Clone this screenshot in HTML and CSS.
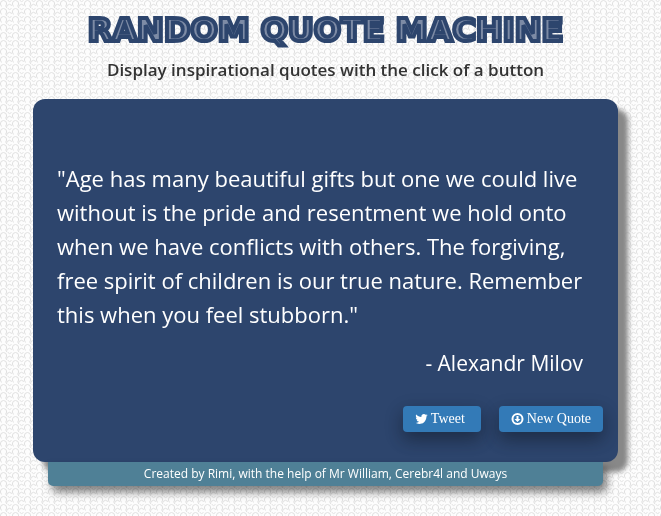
FILE: index.html
```html
<!DOCTYPE html>
<html lang="en">
<head>
<meta charset="utf-8">
<meta name="viewport" content="width=device-width, initial-scale=1">
<title>Random Quote Machine</title>
<link rel="stylesheet" href="styles.css">
</head>
<body>
<svg class="backdrop" aria-hidden="true">
  <defs>
    <pattern id="weave" width="12" height="8" patternUnits="userSpaceOnUse">
      <g fill="none" stroke="#e0e0e0" stroke-width="1">
        <path d="M1 1.500Q3.500-.5 6 1.500M1 1.500Q-.5 4 1.500 6.500M6 1.500Q7.500 4 5.500 6.500"/>
        <path d="M7 5.500Q9.500 3 12 5.500M7 5.500L6.500 8M7.500 0Q9.500 3 11.500 .5"/>
      </g>
    </pattern>
  </defs>
  <rect width="100%" height="100%" fill="url(#weave)"/>
</svg>
<div class="page">
  <header class="header">
    <h1 class="title">RANDOM QUOTE MACHINE</h1>
    <p class="subtitle">Display inspirational quotes with the click of a button</p>
  </header>
  <main class="card">
    <blockquote class="quote">"Age has many beautiful gifts but one we could live without is the pride and resentment we hold onto when we have conflicts with others. The forgiving, free spirit of children is our true nature. Remember this when you feel stubborn."</blockquote>
    <p class="author">- Alexandr Milov</p>
    <div class="actions">
      <button class="btn btn-tweet" type="button">
        <svg class="icon" viewBox="0 0 1664 1792" aria-hidden="true"><path fill="currentColor" d="M1620 408q-67 98-162 167 1 14 1 42 0 130-38 259.500t-115.500 248.500-184.500 210.500-258 146-323 54.500q-271 0-496-145 35 4 78 4 225 0 401-138-105-2-188-64.500t-114-159.500q33 5 61 5 43 0 85-11-112-23-185.500-111.500t-73.500-205.500v-4q68 38 146 41-66-44-105-115t-39-154q0-88 44-163 121 149 294.500 238.500t371.500 99.500q-8-38-8-74 0-134 94.500-228.500t228.500-94.500q140 0 236 102 109-21 205-78-37 115-142 178 93-10 186-50z"/></svg>
        Tweet
      </button>
      <button class="btn" type="button">
        <svg class="icon" viewBox="0 0 12 14" aria-hidden="true"><circle cx="6" cy="7" r="5" fill="none" stroke="currentColor" stroke-width="2"/><path fill="currentColor" d="M5 4h2v3h2L6 10 3 7h2z"/></svg>
        New Quote
      </button>
    </div>
  </main>
  <footer class="footer">Created by Rimi, with the help of Mr William, Cerebr4l and Uways</footer>
</div>
</body>
</html>
```
FILE: styles.css
```css
* { box-sizing: border-box; }

body {
  margin: 0;
  background: #fdfdfd;
  color: #333;
  font-family: "Open Sans", sans-serif;
}

.backdrop {
  position: fixed;
  inset: 0;
  z-index: -1;
  width: 100%;
  height: 100%;
}

.page {
  padding: 8px 43px 30px 33px;
}

.header {
  text-align: center;
}

.title {
  margin: 0;
  color: #7d8ba5;
  font: bold 32px/44px "DejaVu Sans", sans-serif;
  white-space: nowrap;
  -webkit-text-stroke: 4px #2d456d;
}

.subtitle {
  margin: 6px 0 18px;
  font-size: 17px;
  font-weight: 600;
  line-height: 23px;
}

.card {
  position: relative;
  padding: 62px 15px 30px 24px;
  border-radius: 12px;
  background: #2d456d;
  box-shadow: 10px 10px 5px #888;
  color: #fff;
}

.quote {
  margin: 0 16px 0 0;
  font-size: 22px;
  line-height: 34px;
}

.author {
  margin: 15px 20px 26px 0;
  font-size: 21px;
  line-height: 34px;
  text-align: right;
}

.actions {
  display: flex;
  justify-content: flex-end;
  gap: 18px;
}

.btn {
  display: flex;
  align-items: center;
  gap: 3px;
  height: 26px;
  padding: 0 12px;
  border: 0;
  border-radius: 4px;
  background: #337ab7;
  box-shadow: 0 8px 16px rgba(0, 0, 0, .2), 0 6px 20px rgba(0, 0, 0, .19);
  color: #fff;
  font: 14px/20px "Liberation Serif", serif;
}

.btn-tweet {
  padding-right: 16px;
}

.icon {
  width: 13px;
  height: 14px;
}

.footer {
  position: relative;
  margin: 0 15px;
  border-radius: 0 0 5px 5px;
  background: #4f8096;
  box-shadow: 4px 6px 8px rgba(0, 0, 0, .5);
  color: #fff;
  font-size: 12px;
  font-weight: 500;
  line-height: 24px;
  text-align: center;
}
```
